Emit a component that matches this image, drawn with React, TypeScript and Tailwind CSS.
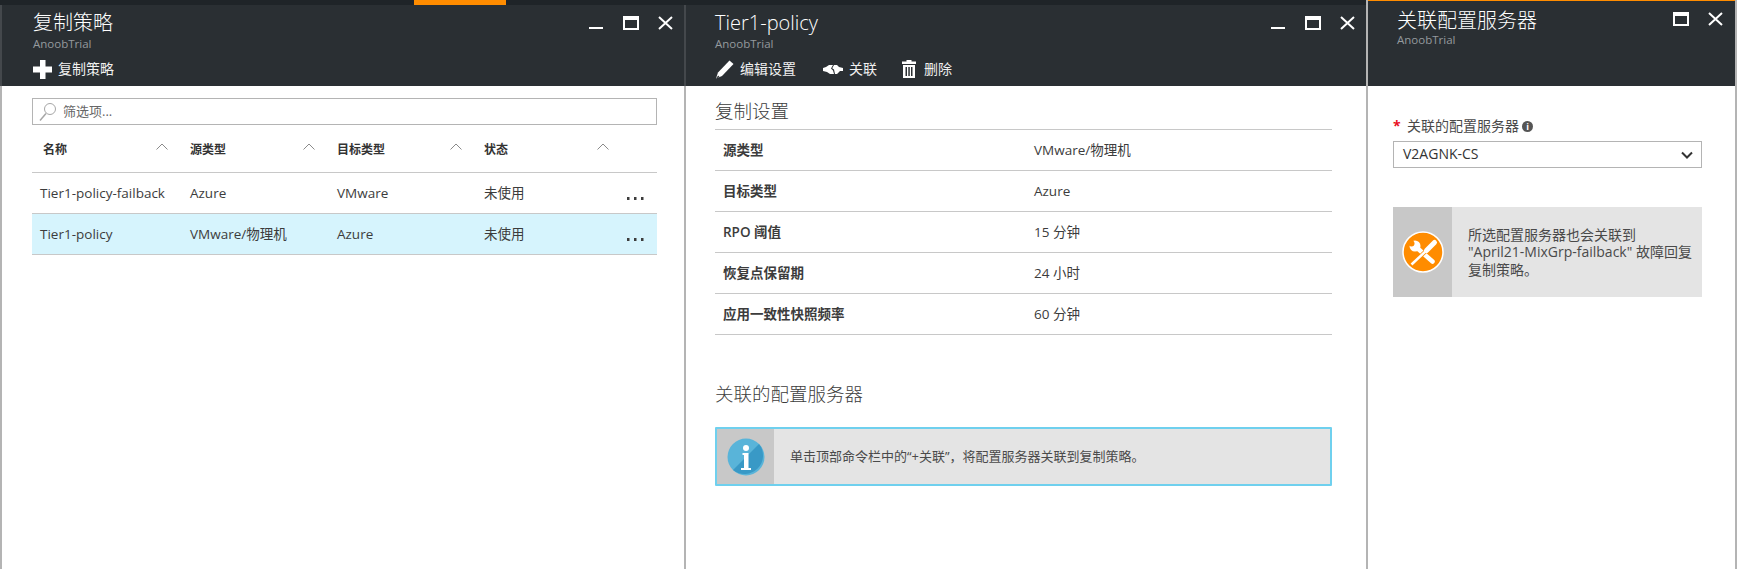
import React from 'react'

const FONT = "font-['Open_Sans','Noto_Sans_CJK_SC',sans-serif]"

const Minimize = () => (
  <svg width="16" height="14" viewBox="0 0 16 14" className="block">
    <rect x="1" y="11" width="14" height="2" fill="#fff" />
  </svg>
)

const Maximize = () => (
  <svg width="16" height="14" viewBox="0 0 16 14" className="block">
    <path d="M0 0h16v14H0z M2 4v8h12V4z" fill="#fff" fillRule="evenodd" />
  </svg>
)

const Close = () => (
  <svg width="15" height="14" viewBox="0 0 15 14" className="block">
    <path d="M1 1l13 12M14 1L1 13" stroke="#fff" strokeWidth="2" fill="none" />
  </svg>
)

const PlusIcon = () => (
  <svg width="19" height="19" viewBox="0 0 19 19" className="block">
    <path d="M7 0h5.500v6.500H19v6h-6.500V19H7v-6.500H0v-6h7z" fill="#fff" />
  </svg>
)

const PencilIcon = () => (
  <svg width="20" height="20" viewBox="0 0 20 20" className="block">
    <path d="M14.500 1.500l4 3.500L7 17l-6 2.500L3 13.500z" fill="#fff" />
    <path d="M3.200 16.500L1 19.500l3.500-1.500z" fill="#2a2f33" />
  </svg>
)

const LinkIcon = () => (
  <svg width="20" height="11" viewBox="0 0 20 11" className="block">
    <path d="M0 4l3-1 3-2h4L8 4.500l2 2 1 3.500H7L4 8 0 7z" fill="#fff" />
    <path d="M11 1h3l2 2 4 1v3h-3l-3 3h-2l-1-4.500-1.800-1.300z" fill="#fff" />
  </svg>
)

const TrashIcon = () => (
  <svg width="14" height="18" viewBox="0 0 14 18" className="block">
    <path
      d="M4.500 0h5v1.500H14V4H0V1.500h4.500zM1 5h12v13H1zM3.500 7v9h1.500V7zM6.300 7v9h1.500V7zM9 7v9h1.500V7z"
      fill="#fff"
      fillRule="evenodd"
    />
  </svg>
)

const SearchIcon = () => (
  <svg width="18" height="20" viewBox="0 0 18 20" className="block">
    <circle cx="11" cy="7" r="5.500" stroke="#a6a6a6" strokeWidth="1" fill="none" />
    <path d="M7 11.500L1 18.500" stroke="#a6a6a6" strokeWidth="1.500" fill="none" />
  </svg>
)

const Caret = () => (
  <svg width="12" height="7" viewBox="0 0 12 7" className="mb-[4px] block">
    <path d="M.5 6.500L6 1l5.500 5.500" stroke="#8a8a8a" strokeWidth="1" fill="none" />
  </svg>
)

const Dots = () => (
  <svg width="17" height="3" viewBox="0 0 17 3" className="block">
    <rect x="0" y="0" width="2.500" height="3" fill="#3c3c3c" />
    <rect x="7" y="0" width="2.500" height="3" fill="#3c3c3c" />
    <rect x="14" y="0" width="2.500" height="3" fill="#3c3c3c" />
  </svg>
)

const InfoBadge = () => (
  <svg width="38" height="38" viewBox="0 0 38 38" className="block">
    <circle cx="19" cy="19" r="18.500" fill="#59b4d9" />
    <path d="M32 6a18.500 18.500 0 0 1-26 26z" fill="#3999c6" />
    <circle cx="19" cy="10" r="3" fill="#fff" />
    <path d="M15.500 15h6v15H24v2H14v-2h3V17h-1.500z" fill="#fff" />
  </svg>
)

const ToolsBadge = () => (
  <svg width="42" height="42" viewBox="0 0 42 42" className="block">
    <circle cx="21" cy="21" r="20" fill="#ff8c00" stroke="#fff" strokeWidth="1.500" />
    <circle cx="13" cy="15" r="5.500" fill="#fff" />
    <circle cx="9.500" cy="12.500" r="3" fill="#ff8c00" />
    <path d="M14 16l16.500 14.500" stroke="#fff" strokeWidth="4.500" strokeLinecap="round" fill="none" />
    <path d="M26 18L14 29.500" stroke="#ff8c00" strokeWidth="4" fill="none" />
    <path d="M32.500 11.500l-8 8" stroke="#fff" strokeWidth="5" strokeLinecap="round" fill="none" />
    <path d="M25 19L9.500 33.500" stroke="#fff" strokeWidth="2.500" fill="none" />
  </svg>
)

const Chevron = () => (
  <svg width="12" height="8" viewBox="0 0 12 8" className="block">
    <path d="M1 1.500l5 5 5-5" stroke="#333" strokeWidth="2" fill="none" />
  </svg>
)

interface HeaderProps {
  title: string
  paddingClass: string
  commands?: { icon: React.ReactNode; label: string; gapClass: string; widthClass: string }[]
}

const BladeHeader: React.FC<HeaderProps> = ({ title, paddingClass, commands }) => (
  <div className={`relative h-[81px] shrink-0 border-l-2 border-[#44484c] bg-[#2a2f33] text-white ${paddingClass}`}>
    <h1 className="pt-[4px] text-[20px] leading-[27px] font-light">{title}</h1>
    <p className="text-[11.500px] leading-[15px] text-[#959a9e]">AnoobTrial</p>
    <div className="mt-[6px] flex h-[24px] items-center">
      {commands?.map((c) => (
        <div key={c.label} className={`flex items-center ${c.gapClass} ${c.widthClass}`}>
          {c.icon}
          <span className="text-[14px] leading-[20px] text-[#f0f0f0]">{c.label}</span>
        </div>
      ))}
    </div>
    <div className="absolute top-[11px] right-[11px] flex items-start gap-[19px]">
      <Minimize />
      <Maximize />
      <Close />
    </div>
  </div>
)

const policies = [
  { name: 'Tier1-policy-failback', source: 'Azure', target: 'VMware', status: '未使用', selected: false },
  { name: 'Tier1-policy', source: 'VMware/物理机', target: 'Azure', status: '未使用', selected: true },
]

const columns = ['名称', '源类型', '目标类型', '状态']

const settings = [
  { label: '源类型', value: 'VMware/物理机' },
  { label: '目标类型', value: 'Azure' },
  { label: 'RPO 阈值', value: '15 分钟' },
  { label: '恢复点保留期', value: '24 小时' },
  { label: '应用一致性快照频率', value: '60 分钟' },
]

const PoliciesBlade = () => (
  <section className="flex w-[684px] shrink-0 flex-col">
    <BladeHeader
      title="复制策略"
      paddingClass="pl-[31px]"
      commands={[{ icon: <PlusIcon />, label: '复制策略', gapClass: 'gap-[6px]', widthClass: '' }]}
    />
    <div className="flex-1 border-l-2 border-[#b4b4b4] pt-[12px] pl-[30px] pr-[27px]">
      <div className="flex h-[27px] items-center border border-[#b4b4b4] pl-[6px] text-[13px] text-[#666]">
        <SearchIcon />
        <span className="ml-[6px]">筛选项...</span>
      </div>
      <div className="grid h-[48px] grid-cols-[147px_147px_147px_1fr] items-center border-b border-[#c8c8c8] pb-[1px] pl-[11px]">
        {columns.map((c) => (
          <div key={c} className="flex w-[125px] items-center justify-between text-[12px] font-bold text-[#333]">
            <span className="mt-[3px]">{c}</span>
            <Caret />
          </div>
        ))}
      </div>
      {policies.map((p) => (
        <div
          key={p.name}
          className={`relative grid h-[41px] grid-cols-[147px_147px_147px_1fr] items-center border-b border-[#c8c8c8] pt-[1px] text-[13.500px] text-[#3c3c3c] ${p.selected ? 'bg-[#d6f4fd]' : ''}`}
        >
          <span className="pl-[8px]">{p.name}</span>
          <span className="pl-[11px]">{p.source}</span>
          <span className="pl-[11px]">{p.target}</span>
          <span className="pl-[11px]">{p.status}</span>
          <span className="absolute top-[24px] right-[13px]">
            <Dots />
          </span>
        </div>
      ))}
    </div>
  </section>
)

const PolicyBlade = () => (
  <section className="flex w-[682px] shrink-0 flex-col">
    <BladeHeader
      title="Tier1-policy"
      paddingClass="pl-[29px]"
      commands={[
        { icon: <PencilIcon />, label: '编辑设置', gapClass: 'gap-[5px]', widthClass: 'w-[108px]' },
        { icon: <LinkIcon />, label: '关联', gapClass: 'gap-[6px]', widthClass: 'w-[79px]' },
        { icon: <TrashIcon />, label: '删除', gapClass: 'gap-[8px]', widthClass: '' },
      ]}
    />
    <div className="flex-1 border-l-2 border-[#b4b4b4] pl-[29px] pr-[34px]">
      <h2 className="mt-[11px] h-[32px] text-[18.500px] leading-[28px] font-light text-[#3c3c3c]">复制设置</h2>
      <div className="border-t border-[#c8c8c8]">
        {settings.map((s) => (
          <div key={s.label} className="flex h-[41px] items-center border-b border-[#c8c8c8] text-[13.500px] text-[#3c3c3c]">
            <span className="w-[319px] pl-[8px] font-semibold">{s.label}</span>
            <span>{s.value}</span>
          </div>
        ))}
      </div>
      <h2 className="mt-[45px] text-[18.500px] leading-[28px] font-light text-[#3c3c3c]">关联的配置服务器</h2>
      <div className="mt-[19px] flex h-[59px] items-stretch rounded-[1px] border-2 border-[#6fd0ee] bg-[#e4e4e4]">
        <div className="flex w-[57px] shrink-0 items-center justify-center bg-[#c8c8c8]">
          <InfoBadge />
        </div>
        <p className="flex items-center pl-[16px] text-[13px] text-[#4a4a4a]">
          单击顶部命令栏中的“+关联”，将配置服务器关联到复制策略。
        </p>
      </div>
    </div>
  </section>
)

const ConfigServerBlade = () => (
  <section className="flex flex-1 flex-col border-r-2 border-l-2 border-[#b4b4b4]">
    <div className="relative h-[86px] shrink-0 border-t border-[#ff8c00] bg-[#2a2f33] pl-[29px] text-white">
      <h1 className="text-[20px] leading-[39px] font-light">关联配置服务器</h1>
      <p className="-mt-[8px] text-[11.500px] leading-[15px] text-[#959a9e]">AnoobTrial</p>
      <div className="absolute top-[11px] right-[12px] flex items-start gap-[19px]">
        <Maximize />
        <Close />
      </div>
    </div>
    <div className="pl-[25px] pr-[33px]">
      <div className="mt-[30px] flex items-center text-[14px] leading-[20px] text-[#4a4a4a]">
        <span className="w-[14px] font-bold text-[#e81123]">*</span>
        <span>关联的配置服务器</span>
        <span className="ml-[3px] flex h-[11px] w-[11px] items-center justify-center rounded-full bg-[#555] text-[9px] leading-none font-bold text-white">
          i
        </span>
      </div>
      <div className="mt-[5px] flex h-[27px] items-center justify-between border border-[#b4b4b4] pr-[8px] pl-[9px] text-[14px] text-[#333]">
        <span className="-mt-[2px]">V2AGNK-CS</span>
        <Chevron />
      </div>
      <div className="mt-[39px] flex h-[90px] bg-[#e4e4e4]">
        <div className="flex w-[59px] shrink-0 items-center justify-center bg-[#c8c8c8]">
          <ToolsBadge />
        </div>
        <p className="self-center pr-[8px] pl-[16px] text-[14px] leading-[17.500px] text-[#4a4a4a]">
          所选配置服务器也会关联到 "April21-MixGrp-failback" 故障回复复制策略。
        </p>
      </div>
    </div>
  </section>
)

export default function App() {
  return (
    <div className={`flex h-[569px] w-[1737px] flex-col overflow-hidden bg-white ${FONT}`}>
      <div className="flex h-full">
        <div className="flex w-[1366px] shrink-0 flex-col">
          <div className="h-[5px] shrink-0 bg-[#1f2428]">
            <div className="ml-[414px] h-[6px] w-[92px] bg-[#ff8c00]" />
          </div>
          <div className="flex flex-1">
            <PoliciesBlade />
            <PolicyBlade />
          </div>
        </div>
        <ConfigServerBlade />
      </div>
    </div>
  )
}
